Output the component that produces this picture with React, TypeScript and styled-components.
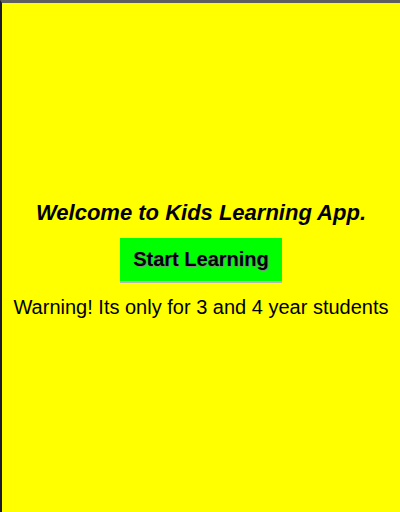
import React from 'react';
import styled, { createGlobalStyle } from 'styled-components';

const GlobalStyle = createGlobalStyle`
  html, body {
    margin: 0;
    padding: 0;
    background: #ffff00;
  }
  * {
    box-sizing: border-box;
  }
`;

const Page = styled.div`
  min-height: 100vh;
  padding-top: 4px;
  background: #ffff00;
  border-top: 3px solid #5f5f5f;
  border-left: 2px solid #1a1a2a;
  display: flex;
  flex-direction: column;
  align-items: center;
  justify-content: center;
  font-family: 'Liberation Sans', Arial, sans-serif;
  color: #000;
`;

const Title = styled.h1`
  margin: 0 0 12px;
  font-size: 22px;
  line-height: 26px;
  font-weight: bold;
  font-style: italic;
`;

const StartButton = styled.button`
  background: #00ff00;
  border: none;
  border-bottom: 2px solid #b5b5b5;
  padding: 10px 13px;
  font-family: inherit;
  font-size: 20px;
  line-height: 23px;
  font-weight: bold;
  color: #000;
  text-shadow: 1px 1px 1px #888;
  cursor: pointer;
`;

const Warning = styled.p`
  margin: 13px 0 0;
  font-size: 20px;
  line-height: 23px;
`;

const App: React.FC = () => {
  return (
    <>
      <GlobalStyle />
      <Page>
        <Title>Welcome to Kids Learning App.</Title>
        <StartButton>Start Learning</StartButton>
        <Warning>Warning! Its only for 3 and 4 year students</Warning>
      </Page>
    </>
  );
};

export default App;
